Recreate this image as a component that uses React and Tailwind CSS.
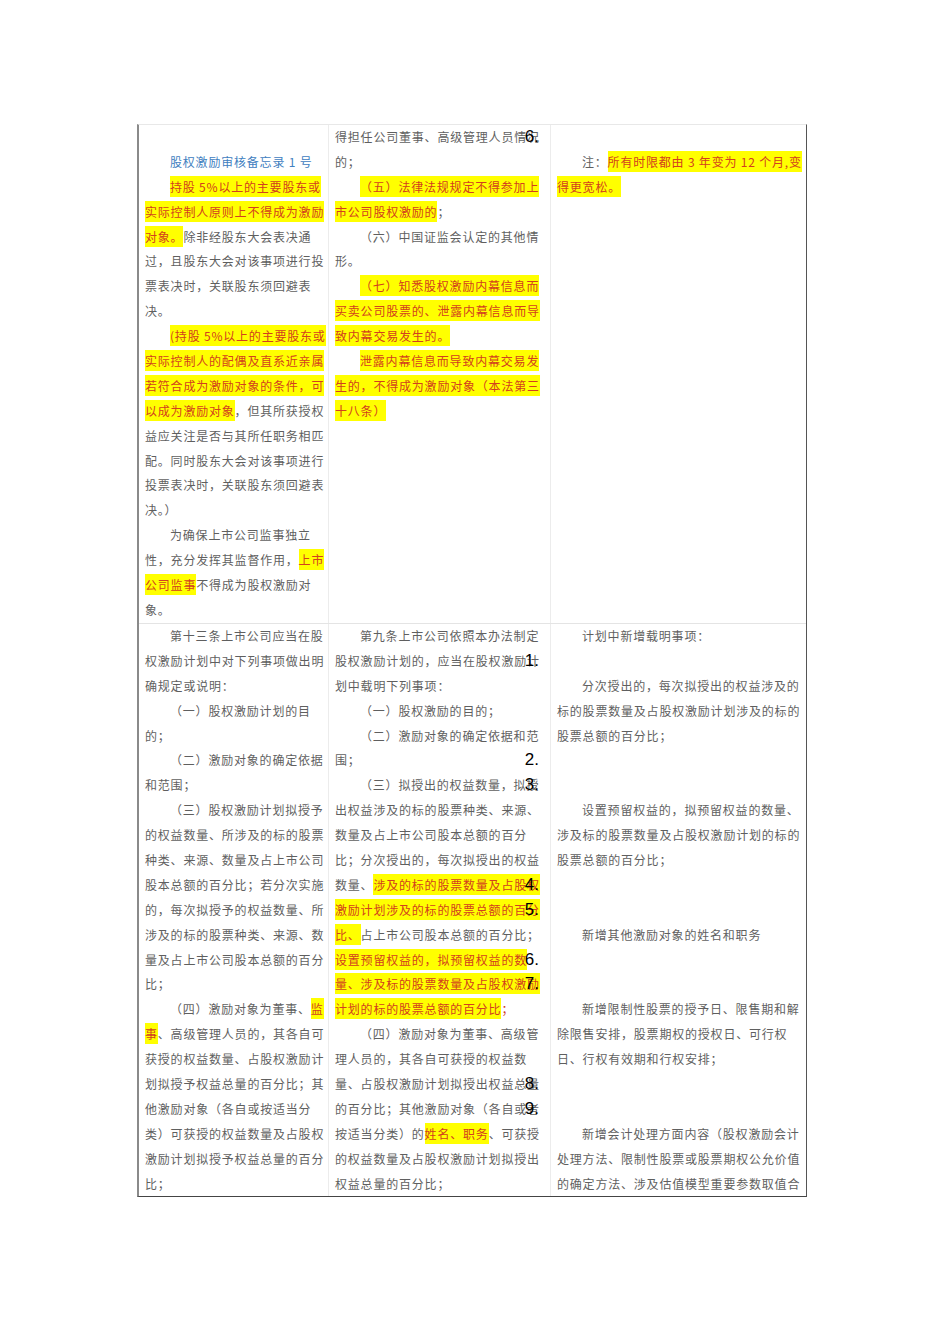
import React from 'react';

// markup: leading "^" = first-line indent, [[..]] = highlighted, {{..}} = blue title, ((..)) = red mark
// "|n" at the end = list number that sits over the line
const col = (rows) => rows.map((r) => {
    const [text, n] = r.split('|');
    const indent = text.startsWith('^');
    return { indent, text: indent ? text.slice(1) : text, n };
});

const row1 = [
    col([
        '',
        '^{{股权激励审核备忘录 1 号}}',
        '^[[持股 5%以上的主要股东或]]',
        '[[实际控制人原则上不得成为激励]]',
        '[[对象。]]除非经股东大会表决通',
        '过，且股东大会对该事项进行投',
        '票表决时，关联股东须回避表',
        '决。',
        '^[[(持股 5%以上的主要股东或]]',
        '[[实际控制人的配偶及直系近亲属]]',
        '[[若符合成为激励对象的条件，可]]',
        '[[以成为激励对象]]，但其所获授权',
        '益应关注是否与其所任职务相匹',
        '配。同时股东大会对该事项进行',
        '投票表决时，关联股东须回避表',
        '决。）',
        '^为确保上市公司监事独立',
        '性，充分发挥其监督作用，[[上市]]',
        '[[公司监事]]不得成为股权激励对',
        '象。',
    ]),
    col([
        '得担任公司董事、高级管理人员情况|6.',
        '的；',
        '^[[（五）法律法规规定不得参加上]]',
        '[[市公司股权激励的]]；',
        '^（六）中国证监会认定的其他情',
        '形。',
        '^[[（七）知悉股权激励内幕信息而]]',
        '[[买卖公司股票的、泄露内幕信息而导]]',
        '[[致内幕交易发生的。]]',
        '^[[泄露内幕信息而导致内幕交易发]]',
        '[[生的，不得成为激励对象（本法第三]]',
        '[[十八条）]]',
    ]),
    col([
        '',
        '^注：[[所有时限都由 3 年变为 12 个月,变]]',
        '[[得更宽松。]]',
    ]),
];

const row2 = [
    col([
        '^第十三条上市公司应当在股',
        '权激励计划中对下列事项做出明',
        '确规定或说明：',
        '^（一）股权激励计划的目',
        '的；',
        '^（二）激励对象的确定依据',
        '和范围；',
        '^（三）股权激励计划拟授予',
        '的权益数量、所涉及的标的股票',
        '种类、来源、数量及占上市公司',
        '股本总额的百分比；若分次实施',
        '的，每次拟授予的权益数量、所',
        '涉及的标的股票种类、来源、数',
        '量及占上市公司股本总额的百分',
        '比；',
        '^（四）激励对象为董事、[[监]]',
        '[[事]]、高级管理人员的，其各自可',
        '获授的权益数量、占股权激励计',
        '划拟授予权益总量的百分比；其',
        '他激励对象（各自或按适当分',
        '类）可获授的权益数量及占股权',
        '激励计划拟授予权益总量的百分',
        '比；',
    ]),
    col([
        '^第九条上市公司依照本办法制定',
        '股权激励计划的，应当在股权激励计|1.',
        '划中载明下列事项：',
        '^（一）股权激励的目的；',
        '^（二）激励对象的确定依据和范',
        '围；|2.',
        '^（三）拟授出的权益数量，拟授|3.',
        '出权益涉及的标的股票种类、来源、',
        '数量及占上市公司股本总额的百分',
        '比；分次授出的，每次拟授出的权益',
        '数量、[[涉及的标的股票数量及占股权]]|4.',
        '[[激励计划涉及的标的股票总额的百分]]|5.',
        '[[比、]]占上市公司股本总额的百分比；',
        '[[设置预留权益的，拟预留权益的数]]|6.',
        '[[量、涉及标的股票数量及占股权激励]]|7.',
        '[[计划的标的股票总额的百分比]]((；))',
        '^（四）激励对象为董事、高级管',
        '理人员的，其各自可获授的权益数',
        '量、占股权激励计划拟授出权益总量|8.',
        '的百分比；其他激励对象（各自或者|9.',
        '按适当分类）的[[姓名、职务]]、可获授',
        '的权益数量及占股权激励计划拟授出',
        '权益总量的百分比；',
    ]),
    col([
        '^计划中新增载明事项：',
        '',
        '^分次授出的，每次拟授出的权益涉及的',
        '标的股票数量及占股权激励计划涉及的标的',
        '股票总额的百分比；',
        '',
        '',
        '^设置预留权益的，拟预留权益的数量、',
        '涉及标的股票数量及占股权激励计划的标的',
        '股票总额的百分比；',
        '',
        '',
        '^新增其他激励对象的姓名和职务',
        '',
        '',
        '^新增限制性股票的授予日、限售期和解',
        '除限售安排，股票期权的授权日、可行权',
        '日、行权有效期和行权安排；',
        '',
        '',
        '^新增会计处理方面内容（股权激励会计',
        '处理方法、限制性股票或股票期权公允价值',
        '的确定方法、涉及估值模型重要参数取值合',
    ]),
];

const Segments = ({ text }) =>
    text.split(/(\[\[.*?\]\]|\{\{.*?\}\}|\(\(.*?\)\))/).filter(Boolean).map((part, i) => {
        if (part.startsWith('[[')) {
            return <span key={i} className="bg-[#ffff00] text-[#d2401e] py-[2px]">{part.slice(2, -2)}</span>;
        }
        if (part.startsWith('{{')) {
            return <span key={i} className="text-[#3f80c0]">{part.slice(2, -2)}</span>;
        }
        if (part.startsWith('((')) {
            return <span key={i} className="text-[#d2401e]">{part.slice(2, -2)}</span>;
        }
        return <span key={i}>{part}</span>;
    });

const Line = ({ indent, text, n }) => (
    <div className="relative h-[24.9px] leading-[24.9px] whitespace-nowrap">
        {indent && <span className="inline-block w-[25px]" />}
        <Segments text={text} />
        {n && (
            <span className="absolute right-[7px] top-0 leading-[24.9px] font-['Liberation_Sans',sans-serif] text-[17px] tracking-normal text-black">
                {n}
            </span>
        )}
    </div>
);

const Cell = ({ lines, last }) => (
    <div className={last ? 'pl-[6px] pr-[4px]' : 'pl-[6px] pr-[4px] border-r border-[#ececec]'}>
        {lines.map((l, i) => <Line key={i} {...l} />)}
    </div>
);

const Row = ({ cells, top }) => (
    <div className={top ? 'grid grid-cols-[190px_222px_255px]' : 'grid grid-cols-[190px_222px_255px] border-t border-[#e4e4e4]'}>
        {cells.map((lines, i) => <Cell key={i} lines={lines} last={i === 2} />)}
    </div>
);

export default function App() {
    return (
        <div className="min-h-[1344px] w-[950px] bg-white pt-[124px] font-['Noto_Sans_CJK_SC',sans-serif] text-[12px] tracking-[0.8px] text-[#5f5f5f]">
            <div className="ml-[137px] w-[670px] border-l-2 border-l-[#8a8a8a] border-r border-r-[#555] border-t border-t-[#e8e8e8] border-b border-b-[#444]">
                <div className="h-[498px] overflow-visible">
                    <Row cells={row1} top />
                </div>
                <Row cells={row2} />
            </div>
        </div>
    );
}
